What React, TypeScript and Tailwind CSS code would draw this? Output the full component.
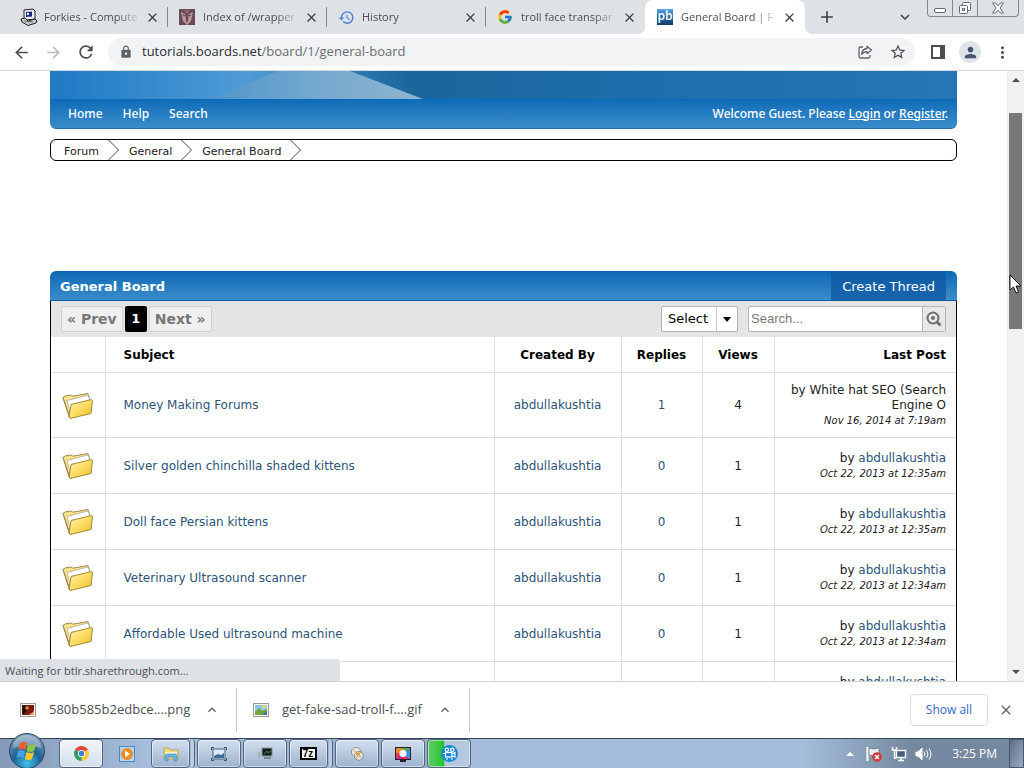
import type { ReactNode } from "react";
import {
    MdAdd,
    MdArrowBack,
    MdArrowForward,
    MdClose,
    MdHistory,
    MdKeyboardArrowUp,
    MdKeyboardArrowDown,
    MdLock,
    MdMoreVert,
    MdPerson,
    MdRefresh,
    MdStarBorder,
} from "react-icons/md";
import { FcGoogle } from "react-icons/fc";

/* ============ ICONS ============ */

const ComputerIcon = () => (
    <svg width="18" height="18" viewBox="0 0 18 18">
        <path d="M4 2l9-1 2 2v8l-9 1-2-2z" fill="#eceef2" stroke="#222" />
        <path d="M6 4l6-.6v5L6 9z" fill="#1b2b7b" />
        <path d="M7 5l2-.3v2L7 7z" fill="#fff" />
        <path d="M1 11l4-1 3 3 7-2 2 2-1 2-8 2.500-6-3.500z" fill="#c6c9d0" stroke="#222" />
        <path d="M4 13l9 1" stroke="#555" strokeWidth=".8" />
    </svg>
);

const MaskIcon = () => (
    <svg width="16" height="16" viewBox="0 0 16 16">
        <rect width="16" height="16" fill="#6b4a55" />
        <path d="M2 3l4 2 2 8 2-8 4-2-2 9-4 4-4-4z" fill="#b9979c" />
        <path d="M5 1l3 4 3-4z" fill="#8a646e" />
        <path d="M4 6l2 1M12 6l-2 1M8 8v5" stroke="#4b2c35" />
    </svg>
);

const BoardsIcon = () => (
    <svg width="16" height="16" viewBox="0 0 16 16">
        <defs>
            <linearGradient id="pb" x1="0" y1="0" x2="0" y2="1">
                <stop offset="0" stopColor="#5aa5e0" />
                <stop offset=".5" stopColor="#2869a6" />
                <stop offset="1" stopColor="#123a66" />
            </linearGradient>
        </defs>
        <rect width="16" height="16" fill="url(#pb)" />
        <text x="8" y="11" textAnchor="middle" fontSize="12" fontWeight="600" fontFamily="Open Sans, sans-serif" fill="#fff">pb</text>
    </svg>
);

const ShareIcon = () => (
    <svg width="16" height="16" viewBox="0 0 16 16" fill="none" stroke="#5f6368" strokeWidth="1.3">
        <path d="M6 3H3.500a1.500 1.500 0 0 0-1.500 1.500v8A1.500 1.500 0 0 0 3.500 14h8a1.500 1.500 0 0 0 1.500-1.500V11" />
        <path d="M10 2.300l4.500 3.700L10 9.700V7.600C7.600 7.600 6 8.400 4.600 10.400 5 7 6.800 4.800 10 4.500z" strokeLinejoin="round" />
    </svg>
);

const SidePanelIcon = () => (
    <svg width="14" height="14" viewBox="0 0 14 14">
        <rect x="1" y="1" width="12" height="12" fill="#fff" stroke="#4b4e52" strokeWidth="2" />
        <rect x="9" y="1" width="4" height="12" fill="#4b4e52" />
    </svg>
);

const FolderIcon = () => (
    <svg width="32" height="28" viewBox="0 0 32 28" className="mx-auto">
        <defs>
            <linearGradient id="folder" x1="0" y1="0" x2="1" y2="1">
                <stop offset="0" stopColor="#fff3b0" />
                <stop offset=".5" stopColor="#fcdc62" />
                <stop offset="1" stopColor="#eebb22" />
            </linearGradient>
        </defs>
        <path d="M1 5.500l2-1.500 6-1 2 1.200 15-2.700 1.500 5L8 26z" fill="#fbe48a" stroke="#9c8a4c" />
        <path d="M5 8.500L26 3l2 5.500L9 24z" fill="#fff" stroke="#a9a9a0" strokeWidth=".8" />
        <path d="M9 12.500L29.500 7.500l1 1-1.500 13L8 26.500 7 25z" fill="url(#folder)" stroke="#a08a34" strokeLinejoin="round" />
        <path d="M1 5.500L7.500 26" stroke="#9c8a4c" />
    </svg>
);

const MagnifierIcon = () => (
    <svg width="16" height="16" viewBox="0 0 16 16" fill="none" stroke="#6e6e6e" strokeWidth="2">
        <circle cx="7" cy="7" r="5.500" />
        <circle cx="7" cy="7" r="2" fill="#6e6e6e" stroke="none" />
        <path d="M11 11l3.500 3.500" strokeWidth="2.600" />
    </svg>
);

const PictureIcon = ({ dark }: { dark?: boolean }) => (
    <svg width="16" height="14" viewBox="0 0 16 14">
        <rect x=".5" y=".5" width="15" height="13" fill="#fff" stroke="#9a9a9a" />
        <rect x="2" y="2" width="12" height="10" fill={dark ? "#7a1d10" : "#8cc4ea"} />
        <path d={dark ? "M2 2h3l3 4-4 5H2z" : "M2 9l4-4 3 3 5-2v6H2z"} fill={dark ? "#2c0d08" : "#6fa53c"} />
        <circle cx={dark ? 7 : 11} cy={dark ? 5 : 4} r="1.800" fill={dark ? "#e08a3c" : "#f6df54"} />
        <path d="M9 12l5-4v4z" fill={dark ? "#e9a95b" : "#3e6ea8"} />
    </svg>
);

const StartOrb = () => (
    <svg width="36" height="36" viewBox="0 0 36 36">
        <defs>
            <radialGradient id="orb" cx=".5" cy=".85" r=".8">
                <stop offset="0" stopColor="#3fc0ea" />
                <stop offset=".5" stopColor="#1d6296" />
                <stop offset="1" stopColor="#7f9fb8" />
            </radialGradient>
        </defs>
        <circle cx="18" cy="18" r="17.500" fill="url(#orb)" stroke="#27455f" />
        <path d="M4 15a14 13 0 0 1 28 0q-14-5-28 0z" fill="#fff" opacity=".3" />
        <path d="M11 10q3-2 7 0l-1.500 7q-4-2-7.500 0z" fill="#ea6030" />
        <path d="M19 11q4 2 8 0l-2 7q-4 2-7.500 0z" fill="#8dc63e" />
        <path d="M9 18q3-2 7 0l-1.500 7q-4-2-7 0z" fill="#46a3e0" />
        <path d="M17.500 19q4 2 7.500 0l-2 7q-4 2-7 0z" fill="#fbc926" />
    </svg>
);

const ChromeIcon = () => (
    <svg width="15" height="15" viewBox="0 0 16 16">
        <path d="M8 8L1.100 4A8 8 0 0 1 14.900 4z" fill="#dd4a3b" />
        <path d="M8 8l6.900-4A8 8 0 0 1 8 16z" fill="#fbcb3c" />
        <path d="M8 8v8A8 8 0 0 1 1.100 4z" fill="#2f9e55" />
        <circle cx="8" cy="8" r="3.800" fill="#fff" />
        <circle cx="8" cy="8" r="2.900" fill="#3f7fe0" />
    </svg>
);

const PlayerIcon = () => (
    <svg width="16" height="16" viewBox="0 0 16 16">
        <rect x=".5" y=".5" width="15" height="15" fill="#b5d6f2" stroke="#4e88c4" />
        <circle cx="8" cy="8" r="6" fill="#f08a1c" />
        <path d="M6 4.500l5 3.500-5 3.500z" fill="#fff" />
    </svg>
);

const ExplorerIcon = () => (
    <svg width="18" height="16" viewBox="0 0 18 16">
        <path d="M2 2h5l1 2h8v9H2z" fill="#f3d978" stroke="#b99b44" strokeWidth=".8" />
        <path d="M3 6h12v3H3z" fill="#fff6c8" />
        <path d="M3 15V10q0-2 2-2h8q2 0 2 2v5h-3v-4H6v4z" fill="#62b5e8" stroke="#3c85b8" strokeWidth=".6" />
    </svg>
);

const ViewerIcon = () => (
    <svg width="16" height="14" viewBox="0 0 16 14">
        <path d="M.5 3V.5H3M13 .5h2.500V3M15.500 11v2.500H13M3 13.500H.5V11" fill="none" stroke="#30506c" />
        <rect x="2" y="2" width="12" height="10" fill="#dcecf6" stroke="#42627c" />
        <path d="M3 9l4-2 3 1 3-2v5H3z" fill="#3a6f93" />
    </svg>
);

const ConsoleIcon = () => (
    <svg width="18" height="14" viewBox="0 0 18 14">
        <rect x="6" y="1" width="10" height="8" fill="#14201a" stroke="#8b959c" />
        <path d="M8 7l3-3 1 2 3-2" fill="none" stroke="#3c8a4e" />
        <path d="M2 5h2v6H2z" fill="#9db6a5" />
        <path d="M8 11h7" stroke="#7a858e" strokeWidth="2" />
    </svg>
);

const SevenZipIcon = () => (
    <svg width="17" height="13" viewBox="0 0 17 13">
        <rect x="1" y="1" width="15" height="11" fill="#fff" stroke="#000" strokeWidth="2" />
        <text x="8" y="10" textAnchor="middle" fontSize="10" fontWeight="700" fontFamily="Liberation Sans, sans-serif">7z</text>
    </svg>
);

const DiscIcon = () => (
    <svg width="15" height="16" viewBox="0 0 16 16">
        <circle cx="6.500" cy="6" r="5" fill="#eee9dd" stroke="#8a8a8a" />
        <circle cx="9.500" cy="10" r="4.800" fill="#dfe2e4" stroke="#8a8a8a" />
        <path d="M4 4l9 9M12 5l-6 8" stroke="#b59a52" />
        <circle cx="8.500" cy="8" r="2" fill="#e4a72c" />
    </svg>
);

const PaintIcon = () => (
    <svg width="16" height="16" viewBox="0 0 16 16">
        <rect x=".5" y="1.500" width="15" height="12" fill="#e5315c" />
        <path d="M1 2h7v5H1z" fill="#f08a2c" />
        <path d="M8 2h7L8 8z" fill="#3db85a" />
        <path d="M15 3v10L8 8z" fill="#279bd8" />
        <path d="M1 13l7-6v6z" fill="#c02a8a" />
        <rect x=".5" y="1.500" width="15" height="12" fill="none" stroke="#2a2030" />
        <circle cx="8" cy="7.500" r="3.500" fill="#fff" />
        <path d="M5 15h6" stroke="#222" strokeWidth="2" />
    </svg>
);

const RecorderIcon = () => (
    <svg width="17" height="17" viewBox="0 0 17 17">
        <circle cx="8.500" cy="8.500" r="8.500" fill="#1688d4" />
        <g fill="none" stroke="#fff" strokeWidth="1.200">
            <circle cx="5.800" cy="4.800" r="1.700" />
            <circle cx="11.200" cy="4.800" r="1.700" />
            <rect x="4.500" y="7.500" width="6.500" height="4.500" />
            <path d="M11 9l3-1.500v4.500L11 11M2 8.500h2M5 14h2M10 14h2" />
        </g>
    </svg>
);

/* ============ DATA ============ */

const tabs: { title: string; icon: ReactNode; active?: boolean }[] = [
    { title: "Forkies - Compute", icon: <ComputerIcon /> },
    { title: "Index of /wrapper", icon: <MaskIcon /> },
    { title: "History", icon: <MdHistory size={17} color="#4a7fd8" /> },
    { title: "troll face transpar", icon: <FcGoogle size={16} /> },
    { title: "General Board | F", icon: <BoardsIcon />, active: true },
];

const threads = [
    { subject: "Money Making Forums", replies: 1, views: 4, date: "Nov 16, 2014 at 7:19am", guest: "White hat SEO (Search Engine O" },
    { subject: "Silver golden chinchilla shaded kittens", replies: 0, views: 1, date: "Oct 22, 2013 at 12:35am" },
    { subject: "Doll face Persian kittens", replies: 0, views: 1, date: "Oct 22, 2013 at 12:35am" },
    { subject: "Veterinary Ultrasound scanner", replies: 0, views: 1, date: "Oct 22, 2013 at 12:34am" },
    { subject: "Affordable Used ultrasound machine", replies: 0, views: 1, date: "Oct 22, 2013 at 12:34am" },
    { subject: "Portable ultrasound", replies: 0, views: 1, date: "Oct 22, 2013 at 12:33am" },
];

const downloads = [
    { name: "580b585b2edbce....png", icon: <PictureIcon dark /> },
    { name: "get-fake-sad-troll-f....gif", icon: <PictureIcon /> },
];

const taskButtons: { name: string; icon: ReactNode; look?: "plain" | "stack" | "busy" | "lit" }[] = [
    { name: "Chrome", icon: <ChromeIcon />, look: "lit" },
    { name: "Media Player", icon: <PlayerIcon />, look: "plain" },
    { name: "Explorer", icon: <ExplorerIcon />, look: "stack" },
    { name: "Photo Viewer", icon: <ViewerIcon /> },
    { name: "Console", icon: <ConsoleIcon /> },
    { name: "7-Zip", icon: <SevenZipIcon />, look: "stack" },
    { name: "Disc", icon: <DiscIcon /> },
    { name: "Paint", icon: <PaintIcon /> },
    { name: "Recorder", icon: <RecorderIcon />, look: "busy" },
];

/* ============ BROWSER ============ */

const TabStrip = () => (
    <div className="flex h-[34px] shrink-0 bg-[#dee1e6] pl-[9px] text-[#4b4f54]">
        {tabs.map((tab, i) => (
            <div
                key={tab.title}
                className={
                    tab.active
                        ? "relative flex w-40 items-center rounded-t-lg bg-white pr-2 pl-3 before:absolute before:bottom-0 before:-left-2 before:size-2 before:bg-[radial-gradient(circle_at_0_0,transparent_8px,white_8px)] after:absolute after:-right-2 after:bottom-0 after:size-2 after:bg-[radial-gradient(circle_at_100%_0,transparent_8px,white_8px)]"
                        : "flex w-[159px] items-center pl-[11px]"
                }
            >
                <span className="flex w-6 shrink-0 items-center">{tab.icon}</span>
                <span className="flex-1 whitespace-nowrap text-[11px] [mask-image:linear-gradient(to_right,black_75%,transparent)]">
                    {tab.title}
                </span>
                <button aria-label="Close tab" className="ml-1 shrink-0">
                    <MdClose size={15} color="#3c4043" />
                </button>
                {!tab.active && <span className={i < 3 ? "ml-[7px] h-5 w-px shrink-0 bg-[#85898f]" : "ml-[7px] w-px shrink-0"} />}
            </div>
        ))}
        <button aria-label="New tab" className="ml-3">
            <MdAdd size={20} color="#3c4043" />
        </button>
        <button aria-label="Search tabs" className="mr-[13px] ml-auto">
            <MdKeyboardArrowDown size={18} color="#3c4043" />
        </button>
        <div className="mr-[5px] flex h-[17px] w-[92px] rounded-b border border-t-0 border-[#85888d]">
            <button aria-label="Minimize" className="flex w-[25px] items-end justify-center border-r border-[#85888d] pb-[3px]">
                <span className="h-[5px] w-3 rounded-xs border border-[#66696e] bg-white" />
            </button>
            <button aria-label="Restore" className="flex w-[25px] items-center justify-center border-r border-[#85888d]">
                <svg width="14" height="14" viewBox="0 0 14 14" fill="#fff" stroke="#66696e">
                    <rect x="4.500" y="1.500" width="8" height="8" rx="1" />
                    <rect x="1.500" y="4.500" width="8" height="8" rx="1" />
                    <rect x="4.500" y="7.500" width="2" height="2" />
                </svg>
            </button>
            <button aria-label="Close" className="flex flex-1 items-center justify-center">
                <svg width="14" height="12" viewBox="0 0 14 12">
                    <path d="M1.500 1h3L7 3.800 9.500 1h3L9 6l3.500 5h-3L7 8.200 4.500 11h-3L5 6z" fill="#fff" stroke="#66696e" />
                </svg>
            </button>
        </div>
    </div>
);

const AddressBar = () => (
    <div className="flex h-[37px] shrink-0 items-center border-b border-[#d5d7da] bg-white pl-3">
        <button aria-label="Back" className="w-8"><MdArrowBack size={19} color="#4b4e52" /></button>
        <button aria-label="Forward" className="w-8"><MdArrowForward size={19} color="#b9bbbe" /></button>
        <button aria-label="Reload" className="w-8"><MdRefresh size={20} color="#4b4e52" /></button>
        <div className="flex h-7 flex-1 items-center rounded-full bg-[#f1f3f4] pr-2 pl-[11px]">
            <MdLock size={14} color="#5f6368" />
            <p className="ml-[9px] flex-1 text-[13px] text-[#6a6d72]">
                <span className="text-[#2b2d30]">tutorials.boards.net</span>/board/1/general-board
            </p>
            <button aria-label="Share" className="mr-4"><ShareIcon /></button>
            <button aria-label="Bookmark"><MdStarBorder size={18} color="#4b4e52" /></button>
        </div>
        <button aria-label="Side panel" className="ml-4"><SidePanelIcon /></button>
        <button aria-label="Profile" className="ml-[14px] flex size-[22px] items-center justify-center rounded-full bg-[#dfe3ea]">
            <MdPerson size={17} color="#44536b" />
        </button>
        <button aria-label="Menu" className="mr-3 ml-3"><MdMoreVert size={19} color="#4b4e52" /></button>
    </div>
);

const Scrollbar = () => (
    <div className="flex w-[17px] shrink-0 flex-col items-center bg-[#f1f1f1] py-[7px]">
        <span className="border-x-4 border-b-4 border-x-transparent border-b-[#505050]" />
        <div className="relative mt-[31px] h-[216px] w-[13px] bg-[#787878]">
            <svg className="absolute top-[161px] left-0" width="14" height="20" viewBox="0 0 14 20">
                <path d="M1 1v15l3.500-3 2.500 6 2.500-1-2.500-6h5z" fill="#fff" stroke="#111" />
            </svg>
        </div>
        <span className="mt-auto border-x-4 border-t-4 border-x-transparent border-t-[#505050]" />
    </div>
);

/* ============ FORUM ============ */

const Banner = () => (
    <header className="overflow-hidden rounded-b-md">
        <svg className="block h-7 w-full" viewBox="0 0 907 28" preserveAspectRatio="none">
            <defs>
                <linearGradient id="sky">
                    <stop offset="0" stopColor="#1e7ac4" />
                    <stop offset=".22" stopColor="#4f9bd6" />
                    <stop offset=".4" stopColor="#1a659c" />
                    <stop offset=".7" stopColor="#1f6fae" />
                    <stop offset="1" stopColor="#2576b5" />
                </linearGradient>
                <linearGradient id="beam">
                    <stop offset="0" stopColor="#4f95cc" />
                    <stop offset=".5" stopColor="#74a8cf" />
                    <stop offset="1" stopColor="#8fb5cf" />
                </linearGradient>
            </defs>
            <rect width="907" height="28" fill="url(#sky)" />
            <path d="M160 28L228 0h72l73 28z" fill="url(#beam)" />
        </svg>
        <nav className="flex h-[30px] items-center border-b border-[#2a6fa6] bg-linear-to-b from-[#0a6bb8] to-[#3a8dca] px-[18px] pr-[9px] font-['Noto_Sans',sans-serif] text-xs font-medium text-white">
            <div className="flex gap-5">
                <a href="#home">Home</a>
                <a href="#help">Help</a>
                <a href="#search">Search</a>
            </div>
            <p className="ml-auto">
                Welcome Guest. Please <a href="#login" className="underline">Login</a> or{" "}
                <a href="#register" className="underline">Register</a>.
            </p>
        </nav>
    </header>
);

const Breadcrumbs = () => (
    <nav className="mt-[10px] flex h-[22px] items-center rounded-md border border-black pl-[13px] text-[11px] text-[#222]">
        {["Forum", "General", "General Board"].map((name) => (
            <span key={name} className="flex items-center">
                <a href="#crumb" className="pt-1">{name}</a>
                <svg className="mr-[10px] ml-[9px]" width="11" height="20" viewBox="0 0 11 20" fill="none" stroke="#444">
                    <path d="M.5 0l10 10-10 10" />
                </svg>
            </span>
        ))}
    </nav>
);

const BoardControls = () => (
    <div className="flex h-9 items-center bg-[#e4e4e4] px-[10px] text-[13px]">
        <button className="h-[26px] rounded-xs border border-[#d0d0d0] bg-[#efefef] px-[5px] text-sm font-bold text-[#777]">« Prev</button>
        <button className="mx-[2px] h-[26px] w-[22px] rounded-xs bg-black font-bold text-white">1</button>
        <button className="h-[26px] rounded-xs border border-[#d0d0d0] bg-[#efefef] px-[5px] text-sm font-bold text-[#777]">Next »</button>

        <div className="ml-auto grid h-[26px] w-[77px] grid-cols-[1fr_21px] rounded-xs border border-[#b5b5b5] bg-white">
            <select aria-label="Select threads" className="col-span-2 col-start-1 row-start-1 appearance-none pl-[6px] outline-none">
                <option>Select</option>
            </select>
            <span className="pointer-events-none col-start-2 row-start-1 flex items-center justify-center border-l border-[#ccc]">
                <span className="border-x-4 border-t-[5px] border-x-transparent border-t-black" />
            </span>
        </div>

        <form className="ml-[10px] flex h-[26px] w-[198px] overflow-hidden rounded-xs border border-[#b5b5b5] bg-white">
            <input
                type="text"
                aria-label="Search threads"
                placeholder="Search..."
                className="min-w-0 flex-1 pl-[2px] font-['Liberation_Sans',sans-serif] text-[13px] outline-none placeholder:text-[#777]"
            />
            <button type="button" aria-label="Search" className="flex w-[23px] items-center justify-center border-l border-[#b5b5b5] bg-[#e8e8e8]">
                <MagnifierIcon />
            </button>
        </form>
    </div>
);

const ThreadTable = () => (
    <table className="w-full table-fixed border-collapse bg-white text-xs leading-[15px] text-[#222] [&_td]:border-t [&_td]:border-l [&_td]:border-[#ddd] [&_td]:pt-[2px] [&_td:first-child]:border-l-0 [&_th]:border-l [&_th]:border-[#ddd] [&_th]:pt-[2px] [&_th:first-child]:border-l-0">
        <colgroup>
            <col className="w-[54px]" />
            <col />
            <col className="w-[127px]" />
            <col className="w-[81px]" />
            <col className="w-[72px]" />
            <col className="w-[182px]" />
        </colgroup>
        <thead className="text-black">
            <tr className="h-[35px]">
                <th aria-label="Status" />
                <th className="pl-[18px] text-left">Subject</th>
                <th>Created By</th>
                <th>Replies</th>
                <th>Views</th>
                <th className="pr-[10px] text-right">Last Post</th>
            </tr>
        </thead>
        <tbody>
            {threads.map((thread) => (
                <tr key={thread.subject} className={thread.guest ? "h-[65px]" : "h-14"}>
                    <td><FolderIcon /></td>
                    <td className="pl-[18px]"><a href="#thread" className="text-[#2c5378]">{thread.subject}</a></td>
                    <td className="text-center"><a href="#user" className="text-[#2c5378]">abdullakushtia</a></td>
                    <td className="text-center text-[#2c5378]">{thread.replies}</td>
                    <td className="text-center">{thread.views}</td>
                    <td className="pr-[10px] text-right">
                        <p>
                            by {thread.guest ?? <a href="#user" className="text-[#2c5378]">abdullakushtia</a>}
                        </p>
                        <p className="text-[10px] italic">{thread.date}</p>
                    </td>
                </tr>
            ))}
        </tbody>
    </table>
);

const ForumPage = () => (
    <main className="min-w-0 flex-1 overflow-hidden px-[50px] font-['Verdana','DejaVu_Sans',sans-serif]">
        <Banner />
        <Breadcrumbs />
        <section className="mt-[110px]">
            <div className="flex h-[30px] items-center justify-between rounded-t-md border-b border-[#0a5ca0] bg-linear-to-b from-[#0a68b4] to-[#3a8dca] pr-[11px] pl-[10px] text-[13px] text-white">
                <h1 className="pt-[2px] font-bold">General Board</h1>
                <button className="h-full bg-[#0f5aa5]/80 px-[11px] pt-[2px]">Create Thread</button>
            </div>
            <div className="border-x border-black">
                <BoardControls />
                <ThreadTable />
            </div>
        </section>
    </main>
);

const DownloadBar = () => (
    <div className="flex h-[57px] shrink-0 items-center border-t border-[#d0d2d5] bg-white text-[#4b4f54]">
        {downloads.map((file) => (
            <div key={file.name} className="flex h-11 w-[233px] items-center border-r border-[#c5c7ca] px-4 first:w-[237px] first:pl-5">
                {file.icon}
                <span className="ml-[13px] flex-1 whitespace-nowrap text-[13px]">{file.name}</span>
                <button aria-label="Open menu"><MdKeyboardArrowUp size={16} color="#5f6368" /></button>
            </div>
        ))}
        <button className="ml-auto h-8 w-[78px] rounded border border-[#dadce0] text-xs text-[#3567c8]">Show all</button>
        <button aria-label="Close downloads" className="mr-[10px] ml-[10px]"><MdClose size={16} color="#5f6368" /></button>
    </div>
);

/* ============ TASKBAR ============ */

const TaskButton = ({ item }: { item: (typeof taskButtons)[number] }) => {
    if (item.look === "plain") {
        return <button aria-label={item.name} className="flex w-11 items-center justify-center">{item.icon}</button>;
    }
    if (item.look === "stack") {
        return (
            <div className="flex w-11 gap-px">
                <button aria-label={item.name} className="flex w-[39px] items-center justify-center rounded-sm border border-[#50637e] bg-linear-to-b from-[#d3dfee] to-[#9db3ce] inset-ring inset-ring-white/50">
                    {item.icon}
                </button>
                <span className="w-1 rounded-r-sm border-r border-[#50637e] bg-[#bdcce0]" />
            </div>
        );
    }
    return (
        <button
            aria-label={item.name}
            className={
                item.look === "busy"
                    ? "flex w-11 items-center justify-center rounded-sm border border-[#50637e] bg-linear-to-r from-[#5ccc62] via-[#1cc42c] via-38% to-[#b4c8de] to-40% inset-ring inset-ring-white/50"
                    : item.look === "lit"
                      ? "flex w-11 items-center justify-center rounded-sm border border-[#50637e] bg-linear-to-b from-[#f2f5f9] to-[#d3deeb] inset-ring inset-ring-white/50"
                      : "flex w-11 items-center justify-center rounded-sm border border-[#50637e] bg-linear-to-b from-[#d3dfee] to-[#9db3ce] inset-ring inset-ring-white/50"
            }
        >
            {item.icon}
        </button>
    );
};

const Taskbar = () => (
    <footer className="relative flex h-[30px] shrink-0 border-t border-[#34475e] bg-linear-to-r from-[#8599b8] via-[#a6bfdd] via-15% to-[#74889f]">
        <button aria-label="Start" className="absolute -top-[6px] left-[9px]"><StartOrb /></button>
        <div className="ml-[59px] flex gap-[2px]">
            {taskButtons.map((item) => <TaskButton key={item.name} item={item} />)}
        </div>
        <div className="flex flex-1 items-center justify-end bg-linear-to-r from-[#a6bedb] from-60% to-[#74889f] to-80% text-white">
            <span className="border-x-4 border-b-4 border-x-transparent border-b-white" />
            <svg className="ml-3" width="17" height="16" viewBox="0 0 17 16">
                <path d="M1.500 1v14" stroke="#fff" strokeWidth="2" />
                <path d="M3 2l5 1 5-1v7l-5 1-5-1z" fill="#e9edf2" stroke="#55606e" strokeWidth=".6" />
                <circle cx="11" cy="11" r="4.800" fill="#d23a3a" />
                <path d="M9 9l4 4M13 9l-4 4" stroke="#fff" strokeWidth="1.500" />
            </svg>
            <svg className="ml-2" width="16" height="16" viewBox="0 0 16 16" fill="none" stroke="#fff">
                <rect x="5.500" y="4.500" width="9" height="7" fill="#4a5f7c" strokeWidth="1.400" />
                <path d="M7 14.500h6M10 12v2M1.500 1v3h4V1M3.500 4v8h2" strokeWidth="1.400" />
            </svg>
            <svg className="ml-2" width="17" height="14" viewBox="0 0 17 14" fill="none" stroke="#fff">
                <path d="M1 5h2l4-4v12L3 9H1z" fill="#fff" />
                <path d="M9 4.500q2 2.500 0 5M11.500 3q3 4 0 8M14 1.500q4 5.500 0 11" />
            </svg>
            <time className="mr-3 ml-5 text-xs">3:25 PM</time>
            <button aria-label="Show desktop" className="h-full w-[15px] border border-[#46566b] bg-linear-to-br from-[#5d6f86] to-[#9aabc0]" />
        </div>
    </footer>
);

export default function App() {
    return (
        <div className="flex h-screen flex-col overflow-hidden bg-white font-['Segoe_UI','Open_Sans',sans-serif]">
            <TabStrip />
            <AddressBar />
            <div className="relative flex min-h-0 flex-1">
                <ForumPage />
                <Scrollbar />
                <div className="absolute bottom-0 left-0 h-[22px] w-[340px] rounded-tr bg-[#dee1e6] pl-[5px] text-[11px] leading-6 text-[#4b4f54]">
                    Waiting for btlr.sharethrough.com...
                </div>
            </div>
            <DownloadBar />
            <Taskbar />
        </div>
    );
}
